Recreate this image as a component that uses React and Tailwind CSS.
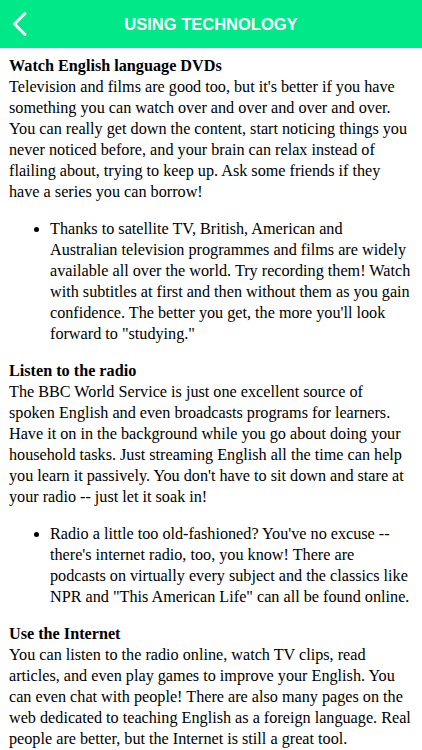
import React from 'react';

const Heading = ({ children }) => <div className="font-bold">{children}</div>;

export default function App() {
  return (
    <div className="w-[422px] h-[750px] overflow-hidden bg-white">
      <div className="h-12 bg-[#00e887] flex items-center relative">
        <button className="absolute left-[11px] top-[11px] text-white">
          <svg width="18" height="26" viewBox="0 0 18 26" fill="none" stroke="white" strokeWidth="3" strokeLinecap="round" strokeLinejoin="round">
            <path d="M14 2.5 L3.5 13 L14 23.5" />
          </svg>
        </button>
        <div className="w-full text-center text-white text-[16.5px] font-bold font-['Liberation_Sans',Arial,sans-serif]">
          USING TECHNOLOGY
        </div>
      </div>

      <div className="px-[9px] pt-[8px] text-black text-[16.2px] leading-[21px] font-['Liberation_Serif','Times_New_Roman',serif]">
        <Heading>Watch English language DVDs</Heading>
        <p>
          Television and films are good too, but it's better if you have something you can watch over and over and over and over. You can really get down the content, start noticing things you never noticed before, and your brain can relax instead of flailing about, trying to keep up. Ask some friends if they have a series you can borrow!
        </p>
        <ul className="list-disc pl-[41px] my-[16px]">
          <li>
            Thanks to satellite TV, British, American and Australian television programmes and films are widely available all over the world. Try recording them! Watch with subtitles at first and then without them as you gain confidence. The better you get, the more you'll look forward to "studying."
          </li>
        </ul>
        <Heading>Listen to the radio</Heading>
        <p>
          The BBC World Service is just one excellent source of<br />
          spoken English and even broadcasts programs for learners. Have it on in the background while you go about doing your household tasks. Just streaming English all the time can help you learn it passively. You don't have to sit down and stare at your radio -- just let it soak in!
        </p>
        <ul className="list-disc pl-[41px] my-[16px]">
          <li>
            Radio a little too old-fashioned? You've no excuse -- there's internet radio, too, you know! There are podcasts on virtually every subject and the classics like NPR and "This American Life" can all be found online.
          </li>
        </ul>
        <Heading>Use the Internet</Heading>
        <p>
          You can listen to the radio online, watch TV clips, read articles, and even play games to improve your English. You can even chat with people! There are also many pages on the web dedicated to teaching English as a foreign language. Real people are better, but the Internet is still a great tool.
        </p>
      </div>
    </div>
  );
}
